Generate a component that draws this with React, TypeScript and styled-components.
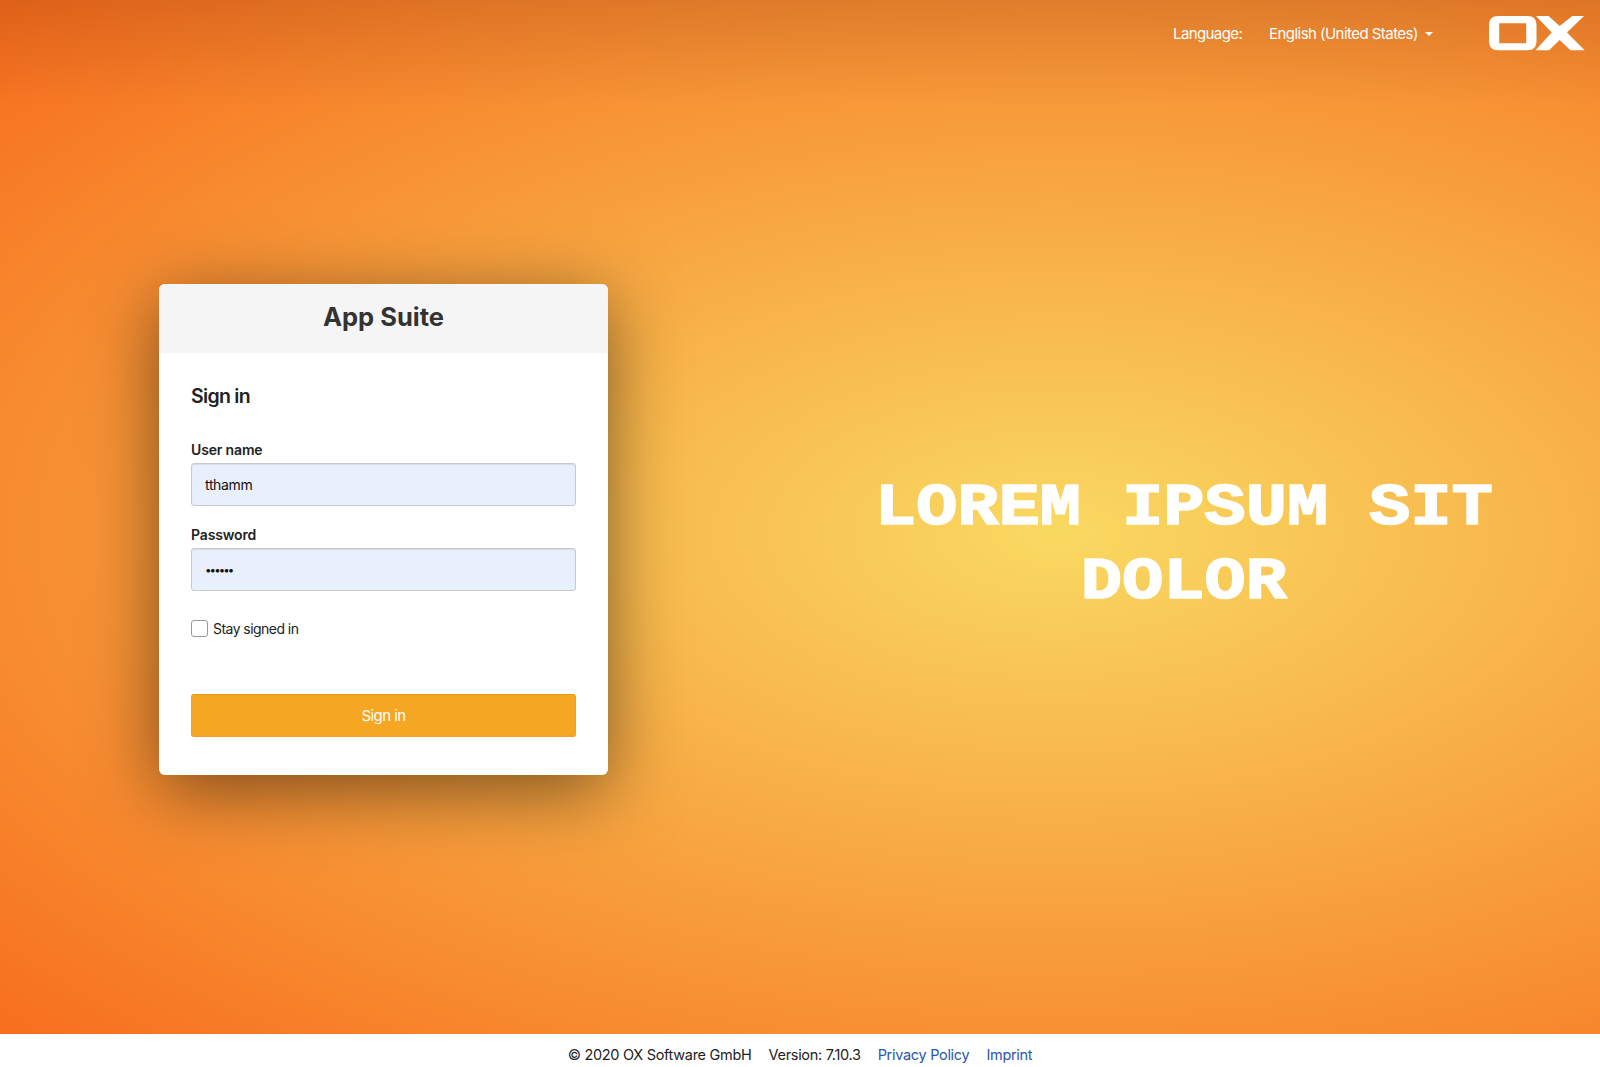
import React from 'react';
import styled, { createGlobalStyle } from 'styled-components';

const GlobalStyle = createGlobalStyle`
  * { box-sizing: border-box; }
  body { margin: 0; font-family: Inter, "Liberation Sans", sans-serif; }
`;

const Page = styled.div`
  display: flex;
  flex-direction: column;
  height: 1067px;
  overflow: hidden;
  background: radial-gradient(ellipse farthest-corner at 66% 50%, #f9d961, #f76b1c);
`;

const Stage = styled.main`
  flex: 1;
  display: flex;
  flex-direction: column;
  background: linear-gradient(rgba(0, 0, 0, 0.1), transparent) top / 100% 108px no-repeat;
`;

const TopBar = styled.header`
  height: 66px;
  padding-right: 15px;
  display: flex;
  align-items: center;
  justify-content: flex-end;
  color: #fff;
  font-size: 15px;
`;

const LanguageLabel = styled.span`
  width: 96px;
  letter-spacing: -0.6px;
`;

const LanguageButton = styled.button`
  width: 220px;
  padding: 0;
  border: 0;
  background: none;
  color: inherit;
  font: inherit;
  letter-spacing: -0.54px;
  display: flex;
  align-items: center;
  gap: 7px;
`;

const Caret = styled.span`
  margin-top: 2px;
  border: 4.5px solid transparent;
  border-top-color: #fff;
  border-bottom: 0;
`;

const Content = styled.div`
  flex: 1;
  display: grid;
  grid-template-columns: 449px 1fr;
  column-gap: 195px;
  padding: 218px 35px 0 159px;
  align-items: start;
`;

const Card = styled.section`
  height: 491px;
  border-radius: 6px;
  overflow: hidden;
  background: #fff;
  color: #222;
  box-shadow: 0 16px 72px rgba(0, 0, 0, 0.5);
`;

const CardTitle = styled.h1`
  margin: 0;
  height: 69px;
  padding-bottom: 5px;
  display: flex;
  align-items: center;
  justify-content: center;
  background: #f5f5f5;
  color: #333;
  font-size: 25.5px;
  font-weight: 700;
  letter-spacing: 0;
`;

const Form = styled.form`
  padding: 31px 32px 0;
  display: flex;
  flex-direction: column;
`;

const FormTitle = styled.h2`
  margin: 0 0 33px;
  font-size: 19.5px;
  line-height: 24px;
  font-weight: 600;
  letter-spacing: -0.7px;
`;

const Label = styled.label`
  font-size: 14px;
  line-height: 18px;
  font-weight: 600;
  letter-spacing: -0.15px;
  margin-bottom: 4px;
`;

const Input = styled.input<{ $last?: boolean }>`
  height: 43px;
  margin: 0 0 ${(p) => (p.$last ? 29 : 20)}px;
  padding: 0 13px;
  border: 1px solid #c8c9cc;
  border-radius: 3px;
  background: #e8effd;
  box-shadow: inset 0 1px 1px rgba(0, 0, 0, 0.08);
  color: #111;
  font-family: inherit;
  font-size: ${(p) => (p.type === 'password' ? 11.5 : 14)}px;
  letter-spacing: ${(p) => (p.type === 'password' ? -1.9 : -0.35)}px;
  outline: none;
`;

const CheckRow = styled.label`
  display: flex;
  align-items: center;
  gap: 5px;
  height: 17px;
  font-size: 14px;
  letter-spacing: -0.55px;
`;

const Checkbox = styled.input`
  appearance: none;
  width: 17px;
  height: 17px;
  margin: 0;
  border: 1px solid #999;
  border-radius: 3px;
  background: #fff;
`;

const Submit = styled.button`
  height: 43px;
  margin-top: 57px;
  border: 1px solid #f3a11c;
  border-top-color: #e59a10;
  border-radius: 3px;
  background: #f5a623;
  color: #fff;
  font-family: inherit;
  font-size: 15px;
  letter-spacing: -0.55px;
`;

const Teaser = styled.p`
  margin: 175px 0 0;
  text-align: center;
  color: #fff;
  font-family: "Courier New", "Liberation Mono", monospace;
  font-size: 68.3px;
  line-height: 86.6px;
  font-weight: 700;
  letter-spacing: 0.2px;
  -webkit-text-stroke: 2px #fff;
  transform: scaleY(0.86);
`;

const Footer = styled.footer`
  height: 33px;
  padding-top: 7px;
  display: flex;
  justify-content: center;
  align-items: center;
  gap: 17px;
  background: #fff;
  color: #222;
  font-size: 14.5px;
  letter-spacing: -0.3px;
`;

const FooterLink = styled.a`
  color: #2a55ad;
  text-decoration: none;
`;

const Logo = () => (
  <svg width="96" height="35" viewBox="0 0 96 35" fill="#fff" aria-label="OX">
    <path
      fillRule="evenodd"
      d="M9 0H38.5Q47.5 0 47.5 9V25.5Q47.5 34.2 38.5 34.2H9Q0 34.2 0 25.5V9Q0 0 9 0ZM10.2 7.2V27.2H37.2V7.2Z"
    />
    <path d="M47 0H59.5L70.7 10 83.3 0H95L78 16.5 95.7 34.2H81.5L70.7 24 60 34.2H46.5L62.7 16.5Z" />
  </svg>
);

export default function App() {
  return (
    <Page>
      <GlobalStyle />
      <Stage>
        <TopBar>
          <LanguageLabel>Language:</LanguageLabel>
          <LanguageButton>
            English (United States)
            <Caret />
          </LanguageButton>
          <Logo />
        </TopBar>
        <Content>
          <Card>
            <CardTitle>App Suite</CardTitle>
            <Form>
              <FormTitle>Sign in</FormTitle>
              <Label htmlFor="user">User name</Label>
              <Input id="user" defaultValue="tthamm" />
              <Label htmlFor="pass">Password</Label>
              <Input id="pass" type="password" defaultValue="secret" $last />
              <CheckRow>
                <Checkbox type="checkbox" />
                Stay signed in
              </CheckRow>
              <Submit type="button">Sign in</Submit>
            </Form>
          </Card>
          <Teaser>LOREM IPSUM SIT DOLOR</Teaser>
        </Content>
      </Stage>
      <Footer>
        <span>© 2020 OX Software GmbH</span>
        <span>Version: 7.10.3</span>
        <FooterLink>Privacy Policy</FooterLink>
        <FooterLink>Imprint</FooterLink>
      </Footer>
    </Page>
  );
}
